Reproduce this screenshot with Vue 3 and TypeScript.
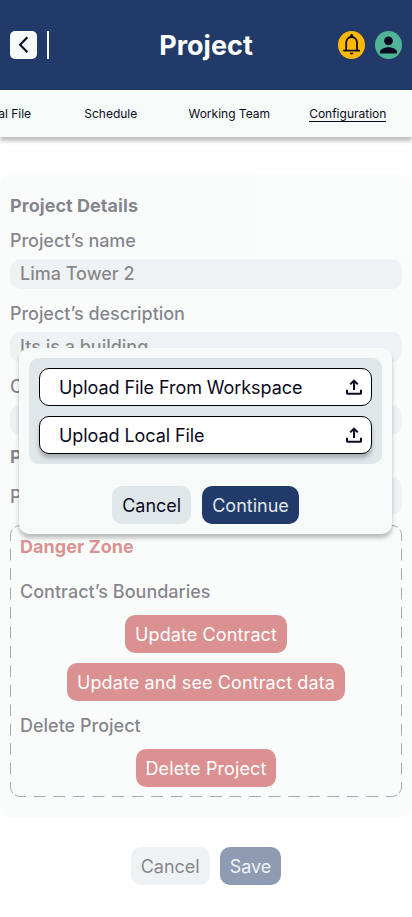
<script setup lang="ts">
interface Tab {
  label: string
  active?: boolean
}

const tabs: Tab[] = [
  { label: 'Technical File' },
  { label: 'Schedule' },
  { label: 'Working Team' },
  { label: 'Configuration', active: true },
]

const uploads: string[] = ['Upload File From Workspace', 'Upload Local File']
</script>

<template>
  <div class="screen">
    <header class="topbar">
      <div class="side">
        <button class="back" aria-label="Back">
          <svg width="27" height="28" viewBox="0 0 27 28" fill="none">
            <path d="M17.4 6.3 10.1 13.8l7.3 7.5" stroke="#0b0a20" stroke-width="2.1" />
          </svg>
        </button>
        <span class="divider"></span>
      </div>
      <h1>Project</h1>
      <div class="side right">
        <svg width="27" height="28" viewBox="0 0 27 28">
          <ellipse cx="13.5" cy="14" rx="13.5" ry="14" fill="#fdb803" />
          <path d="M5.2 19.7H22M8.2 19.4V11.6a5.4 5.6 0 0 1 10.8 0V19.4" fill="none" stroke="#0b0a20" stroke-width="1.8" />
          <path d="M12.1 6V4.6a1.5 1.5 0 0 1 3 0V6z" fill="#0b0a20" />
          <path d="M11.8 21.7h3.6a1.8 1.7 0 0 1-3.6 0z" fill="#0b0a20" />
        </svg>
        <svg width="27" height="28" viewBox="0 0 27 28">
          <ellipse cx="13.5" cy="14" rx="13.5" ry="14" fill="#50b497" />
          <circle cx="13.5" cy="9.8" r="4.4" fill="#0b0a20" />
          <path d="M4.9 22.6v-1.5c0-3.2 5.2-4.9 8.6-4.9s8.6 1.7 8.6 4.9v1.5z" fill="#0b0a20" />
        </svg>
      </div>
    </header>

    <nav class="tabs">
      <a v-for="t in tabs" :key="t.label" class="tab"><span :class="{ active: t.active }">{{ t.label }}</span></a>
    </nav>

    <main class="faded">
      <section class="card">
        <h2>Project Details</h2>
        <label>Project’s name</label>
        <div class="field">Lima Tower 2</div>
        <label>Project’s description</label>
        <div class="field">Its is a building</div>
        <label>Client</label>
        <div class="field"></div>
        <h2 class="plan">Project Files</h2>
        <div class="row">
          <span>Plan</span>
          <div class="file"></div>
        </div>
        <div class="danger">
          <svg class="dashes" width="392" height="272" viewBox="0 0 392 272" fill="none" stroke="#555">
            <path class="v" d="M3.3 3.3A9.5 9.5 0 0 0 .5 10V262A9.5 9.5 0 0 0 3.3 268.7" />
            <path class="v" d="M388.7 3.3A9.5 9.5 0 0 1 391.5 10V262A9.5 9.5 0 0 1 388.7 268.7" />
            <path class="h" d="M3.3 3.3A9.5 9.5 0 0 1 10 .5H382A9.5 9.5 0 0 1 388.7 3.3" />
            <path class="h" d="M3.3 268.7A9.5 9.5 0 0 0 10 271.5H382A9.5 9.5 0 0 0 388.7 268.7" />
          </svg>
          <h2>Danger Zone</h2>
          <h3 class="first">Contract’s Boundaries</h3>
          <button class="btn red">Update Contract</button>
          <button class="btn red">Update and see Contract data</button>
          <h3>Delete Project</h3>
          <button class="btn red">Delete Project</button>
        </div>
      </section>
      <div class="actions">
        <button class="btn light">Cancel</button>
        <button class="btn navy">Save</button>
      </div>
    </main>

    <div class="modal" role="dialog">
      <div class="options">
        <button v-for="u in uploads" :key="u" class="option">
          <span>{{ u }}</span>
          <svg width="16" height="16" viewBox="0 0 16 16" fill="none" stroke="#0b0a20" stroke-width="2">
            <path d="M8 11V1.8M4.2 5.4 8 1.7l3.8 3.7M1 10.8v3.1a.9.9 0 0 0 .9.9h12.2a.9.9 0 0 0 .9-.9v-3.1" />
          </svg>
        </button>
      </div>
      <div class="actions">
        <button class="btn light">Cancel</button>
        <button class="btn navy">Continue</button>
      </div>
    </div>
  </div>
</template>

<style>
body {
  background: #fff;
}
</style>

<style scoped>
.screen {
  position: relative;
  width: 412px;
  height: 917px;
  overflow: hidden;
  font-family: Inter, sans-serif;
  font-size: 18px;
  line-height: 22px;
  color: #0b0a20;
}
.screen * {
  box-sizing: border-box;
}
h1,
h2,
h3 {
  margin: 0;
}
button {
  font: inherit;
  color: inherit;
  border: 0;
  margin: 0;
}
.topbar {
  height: 90px;
  padding: 0 10px;
  background: #223a6a;
  display: flex;
  align-items: center;
}
.side {
  flex: 1;
  display: flex;
  gap: 10px;
}
.side.right {
  justify-content: flex-end;
}
.side svg {
  display: block;
}
.back {
  width: 27px;
  height: 28px;
  padding: 0;
  background: #f6faf9;
  border-radius: 5px;
}
.divider {
  width: 2px;
  height: 28px;
  background: #f6faf9;
}
h1 {
  padding-top: 2px;
  color: #fff;
  font-size: 27px;
  line-height: 32px;
  font-weight: 700;
}
.tabs {
  height: 47px;
  padding-right: 5px;
  background: #f6faf9;
  box-shadow: 0 4px 4px rgba(0, 0, 0, 0.25);
  display: flex;
  justify-content: flex-end;
  align-items: center;
  font-size: 12px;
  line-height: 15px;
}
.tab {
  flex: 0 0 118.5px;
  text-align: center;
}
.tab span {
  display: inline-block;
}
.tab .active {
  border-bottom: 1px solid #0b0a20;
  margin-bottom: -1px;
}
.faded {
  opacity: 0.5;
  padding-top: 37px;
}
.card {
  height: 643px;
  padding: 21px 10px 20px;
  border-radius: 12px;
  background: #f7fbf9;
  display: flex;
  flex-direction: column;
}
h2 {
  font-size: 18px;
  font-weight: 700;
  letter-spacing: 0.05px;
}
label {
  margin: 13px 0 7px;
  font-weight: 500;
  letter-spacing: -0.05px;
}
.field {
  height: 30px;
  padding: 4px 10px;
  border-radius: 10px;
  background: #e0e7ec;
  color: #111;
  font-weight: 500;
}
.field + label {
  margin-top: 14px;
}
.plan {
  margin-top: 11px;
  color: #111;
}
.row {
  margin-top: 9px;
  display: flex;
  align-items: center;
  gap: 10px;
  font-weight: 500;
}
.row span {
  padding-top: 2px;
}
.file {
  flex: 1;
  height: 38px;
  border-radius: 10px;
  background: #e0e7ec;
}
.danger {
  position: relative;
  height: 272px;
  margin-top: 10px;
  padding: 11px 10px 10px;
  display: flex;
  flex-direction: column;
  align-items: center;
}
.dashes {
  position: absolute;
  inset: 0;
}
.v {
  stroke-dasharray: 11.67 7.78;
  stroke-dashoffset: -1.7;
}
.h {
  stroke-dasharray: 11.75 7.82;
  stroke-dashoffset: -1.7;
}
.danger h2 {
  align-self: flex-start;
  color: #b92525;
}
.danger h3 {
  align-self: flex-start;
  font-size: 18px;
  font-weight: 500;
  margin: 14px 0 12px;
}
.danger .first {
  margin-top: 23px;
}
.btn {
  height: 38px;
  padding: 2px 10px 0;
  border-radius: 10px;
  white-space: nowrap;
}
.red {
  background: #b92525;
  color: #fff;
  letter-spacing: 0.11px;
}
.red + .red {
  margin-top: 10px;
}
.light {
  background: #e0e7ea;
}
.navy {
  background: #223a6a;
  color: #e0e7ea;
}
.actions {
  margin-top: 30px;
  display: flex;
  justify-content: center;
  gap: 10px;
}
.modal {
  position: absolute;
  left: 19px;
  top: 348px;
  width: 373px;
  height: 186px;
  padding: 10px;
  border-radius: 10px;
  background: #f6faf9;
  box-shadow: 0 4px 4px rgba(0, 0, 0, 0.25);
}
.options {
  padding: 10px;
  border-radius: 10px;
  background: #e0e7ea;
  display: flex;
  flex-direction: column;
  gap: 10px;
}
.option {
  height: 38px;
  padding: 0 9px 0 19px;
  border: 1px solid #000;
  border-radius: 10px;
  background: #fff;
  display: flex;
  align-items: center;
  justify-content: space-between;
  letter-spacing: -0.07px;
}
.option span {
  padding-top: 2px;
}
.option:last-child {
  box-shadow: 0 4px 4px rgba(0, 0, 0, 0.25);
}
.modal .actions {
  margin-top: 22px;
  gap: 11px;
}
</style>
